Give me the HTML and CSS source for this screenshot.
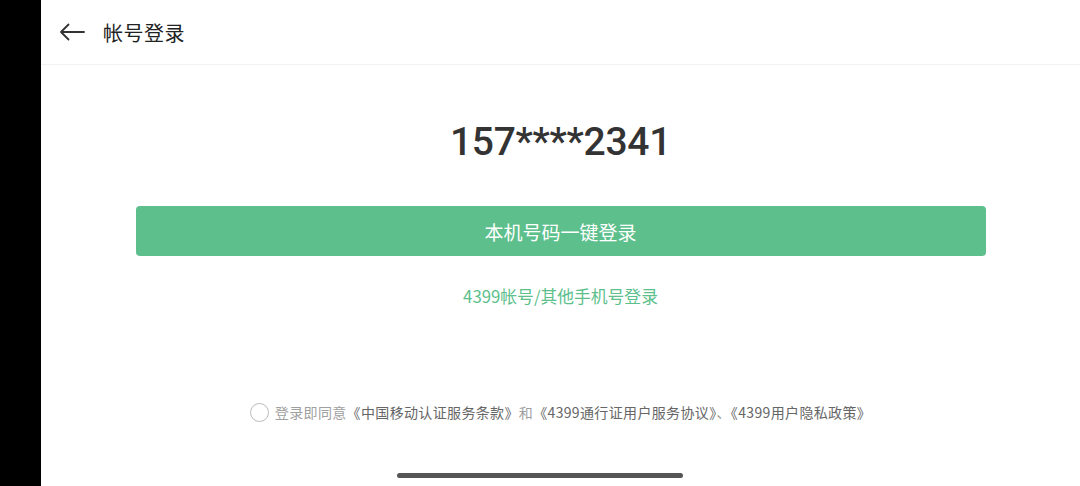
FILE: index.html
```html
<!DOCTYPE html>
<html lang="zh-CN">
<head>
    <meta charset="UTF-8">
    <meta name="viewport" content="width=device-width, initial-scale=1.0">
    <title>帐号登录</title>
    <link rel="stylesheet" href="styles.css">
</head>
<body>
    <div class="screen">
        <div class="side-bar"></div>

        <div class="page">
            <header class="top-bar">
                <svg class="back-icon" width="26" height="18" viewBox="0 0 26 18">
                    <path d="M25 9H2M9.5 1.5L2 9l7.5 7.5" fill="none" stroke="#333" stroke-width="1.8" stroke-linecap="round" stroke-linejoin="round"/>
                </svg>
                <h1 class="title">帐号登录</h1>
            </header>

            <main class="content">
                <div class="phone">157****2341</div>
                <button class="login-btn">本机号码一键登录</button>
                <a class="other-login" href="#">4399帐号/其他手机号登录</a>

                <div class="agreement">
                    <span class="check"></span>
                    <span class="agree-text">登录即同意<em>《中国移动认证服务条款》</em>和<em>《4399通行证用户服务协议》</em>、<em>《4399用户隐私政策》</em></span>
                </div>
            </main>
        </div>

        <!-- 系统手势条 -->
        <div class="home-bar"></div>
    </div>
</body>
</html>
```

FILE: styles.css
```css
* {
    box-sizing: border-box;
    margin: 0;
    padding: 0;
}

body {
    font-family: "Noto Sans CJK SC", "Noto Sans", sans-serif;
    background: #fff;
}

.screen {
    position: relative;
    display: flex;
    height: 486px;
    overflow: hidden;
}

.side-bar {
    width: 41px;
    background: #000;
    flex-shrink: 0;
}

.page {
    flex: 1;
    display: flex;
    flex-direction: column;
    background: #fff;
}

.top-bar {
    height: 65px;
    display: flex;
    align-items: center;
    padding-left: 18px;
    border-bottom: 1px solid #f2f2f2;
}

.back-icon {
    margin-right: 18px;
    margin-top: -1px;
}

.title {
    font-size: 20px;
    font-weight: 400;
    color: #222;
    letter-spacing: 0.5px;
}

.content {
    display: flex;
    flex-direction: column;
    align-items: center;
}

.phone {
    margin-top: 53px;
    font-family: Roboto, "Noto Sans", sans-serif;
    font-weight: 500;
    font-size: 39px;
    line-height: 48px;
    color: #333;
    letter-spacing: -0.3px;
}

.login-btn {
    margin-top: 40px;
    width: 850px;
    height: 50px;
    border: none;
    border-radius: 4px;
    background: #5dbf8c;
    color: #fff;
    font-family: inherit;
    font-size: 19px;
}

.other-login {
    margin-top: 28px;
    font-size: 16.8px;
    line-height: 24px;
    color: #5dbf8c;
    text-decoration: none;
}

.agreement {
    margin-top: 94px;
    display: flex;
    align-items: center;
    line-height: 20px;
}

.check {
    width: 19px;
    height: 19px;
    border: 1.5px solid #bbb;
    border-radius: 50%;
    margin-right: 6px;
}

.agree-text {
    font-size: 14px;
    letter-spacing: 0.35px;
    color: #a0a0a0;
}

.agree-text em {
    font-style: normal;
    color: #666;
}

.home-bar {
    position: absolute;
    left: 397px;
    bottom: 8px;
    width: 286px;
    height: 5px;
    border-radius: 3px;
    background: #555;
}
```
